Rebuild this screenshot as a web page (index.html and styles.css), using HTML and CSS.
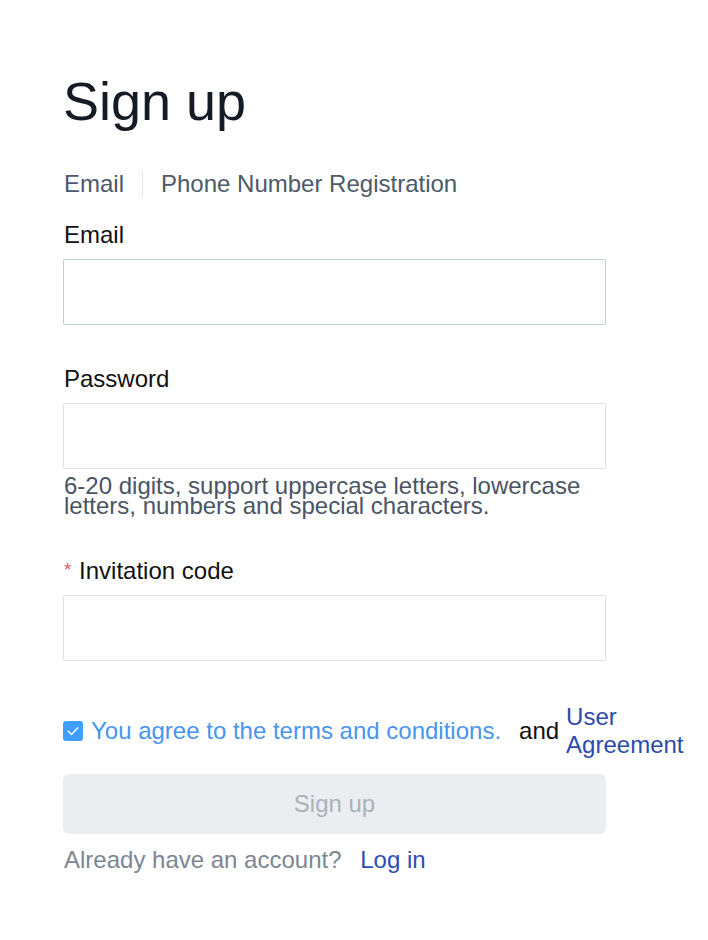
FILE: index.html
```html
<!DOCTYPE html>
<html>
<head>
<meta charset="utf-8">
<link rel="stylesheet" href="styles.css">
</head>
<body>
<div class="page">
  <h1 class="title">Sign up</h1>
  <div class="tabs">
    <span class="tab">Email</span>
    <span class="sep"></span>
    <span class="tab">Phone Number Registration</span>
  </div>
  <div class="field field-first">
    <label class="label">Email</label>
    <div class="input input-active"></div>
  </div>
  <div class="field">
    <label class="label">Password</label>
    <div class="input"></div>
    <div class="hint">6-20 digits, support uppercase letters, lowercase letters, numbers and special characters.</div>
  </div>
  <div class="field">
    <label class="label"><span class="req">*</span> Invitation code</label>
    <div class="input"></div>
  </div>
  <div class="agree">
    <span class="check"><svg viewBox="0 0 20 20" width="20" height="20"><path d="M5.2 10.3 L8.5 13.4 L14.8 6.8" fill="none" stroke="#fff" stroke-width="1.4" stroke-linecap="round" stroke-linejoin="round"/></svg></span>
    <span class="agree-text">You agree to the terms and conditions.</span>
    <span class="and">and</span>
    <a class="ua">User Agreement</a>
  </div>
  <button class="btn">Sign up</button>
  <div class="login">
    <span class="have">Already have an account?</span>
    <a class="login-link">Log in</a>
  </div>
</div>
</body>
</html>
```
FILE: styles.css
```css
html, body {
  margin: 0;
  padding: 0;
  background: #fff;
}
body {
  font-family: "Liberation Sans", Arial, sans-serif;
}
.page {
  padding: 69px 0 0 63px;
  width: 543px;
}
.title {
  margin: 0;
  font-size: 54px;
  font-weight: 400;
  color: #141b25;
  line-height: 64px;
}
.tabs {
  display: flex;
  align-items: center;
  margin-top: 37px;
  height: 28px;
  padding-left: 1px;
}
.tab {
  font-size: 24px;
  line-height: 28px;
  color: #4d5968;
}
.sep {
  width: 1px;
  height: 24px;
  background: #e5e7ea;
  margin: 0 18px;
}
.field {
  display: flex;
  flex-direction: column;
}
.label {
  font-size: 24px;
  color: #111;
  line-height: 28px;
  margin-top: 40px;
  margin-bottom: 10px;
  padding-left: 1px;
}
.field-first .label {
  margin-top: 23px;
}
.req {
  color: #e25c5c;
  font-size: 19px;
  vertical-align: 3px;
  margin-right: 1px;
}
.input {
  height: 64px;
  border: 1px solid #dfe2e7;
  border-radius: 2px;
  background: #fff;
}
.input-active {
  border-color: #bccbd6;
}
.hint {
  font-size: 24px;
  line-height: 20px;
  color: #4a5463;
  margin-top: 7px;
  padding-left: 1px;
}
.agree {
  display: flex;
  align-items: center;
  margin-top: 42px;
  height: 56px;
  width: 640px;
}
.check {
  width: 20px;
  height: 20px;
  background: #409eff;
  border-radius: 3px;
  display: flex;
  align-items: center;
  justify-content: center;
  flex: none;
}
.agree-text {
  font-size: 24px;
  line-height: 28px;
  color: #4795ef;
  margin-left: 8px;
  white-space: nowrap;
}
.and {
  font-size: 24px;
  line-height: 28px;
  color: #111;
  margin-left: 18px;
  white-space: nowrap;
}
.ua {
  font-size: 24px;
  color: #2c4ba8;
  width: 120px;
  line-height: 28px;
  margin-left: 7px;
  flex: none;
}
.btn {
  display: block;
  width: 543px;
  height: 60px;
  margin-top: 15px;
  border: none;
  border-radius: 6px;
  background: #ebedf0;
  color: #a9b1bb;
  font-family: inherit;
  font-size: 24px;
  padding: 0;
}
.login {
  margin-top: 12px;
  font-size: 24px;
  line-height: 28px;
  padding-left: 1px;
}
.have {
  color: #7c8692;
}
.login-link {
  color: #2f4db0;
  margin-left: 12px;
}
```
